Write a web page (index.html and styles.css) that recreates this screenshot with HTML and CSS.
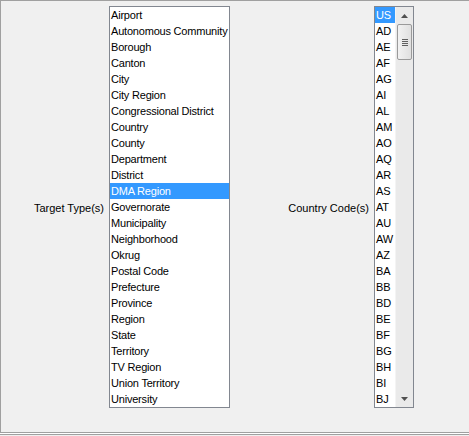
FILE: index.html
```html
<!DOCTYPE html>
<html>
<head>
<meta charset="utf-8">
<link rel="stylesheet" href="styles.css">
</head>
<body>
<div class="panel">
  <div class="row">
    <div class="label label-target">Target Type(s)</div>
    <div class="list list-types">
      <div class="item">Airport</div>
      <div class="item">Autonomous Community</div>
      <div class="item">Borough</div>
      <div class="item">Canton</div>
      <div class="item">City</div>
      <div class="item">City Region</div>
      <div class="item">Congressional District</div>
      <div class="item">Country</div>
      <div class="item">County</div>
      <div class="item">Department</div>
      <div class="item">District</div>
      <div class="item selected">DMA Region</div>
      <div class="item">Governorate</div>
      <div class="item">Municipality</div>
      <div class="item">Neighborhood</div>
      <div class="item">Okrug</div>
      <div class="item">Postal Code</div>
      <div class="item">Prefecture</div>
      <div class="item">Province</div>
      <div class="item">Region</div>
      <div class="item">State</div>
      <div class="item">Territory</div>
      <div class="item">TV Region</div>
      <div class="item">Union Territory</div>
      <div class="item">University</div>
    </div>
    <div class="label label-country">Country Code(s)</div>
    <div class="list list-codes">
      <div class="codes">
        <div class="item selected">US</div>
        <div class="item">AD</div>
        <div class="item">AE</div>
        <div class="item">AF</div>
        <div class="item">AG</div>
        <div class="item">AI</div>
        <div class="item">AL</div>
        <div class="item">AM</div>
        <div class="item">AO</div>
        <div class="item">AQ</div>
        <div class="item">AR</div>
        <div class="item">AS</div>
        <div class="item">AT</div>
        <div class="item">AU</div>
        <div class="item">AW</div>
        <div class="item">AZ</div>
        <div class="item">BA</div>
        <div class="item">BB</div>
        <div class="item">BD</div>
        <div class="item">BE</div>
        <div class="item">BF</div>
        <div class="item">BG</div>
        <div class="item">BH</div>
        <div class="item">BI</div>
        <div class="item">BJ</div>
      </div>
      <div class="scrollbar">
        <div class="arrow">
          <svg width="7" height="4" viewBox="0 0 7 4"><path d="M0 4 L3.5 0 L7 4 Z" fill="#505050"/></svg>
        </div>
        <div class="track">
          <div class="thumb">
            <div class="grip"></div>
          </div>
        </div>
        <div class="arrow">
          <svg width="7" height="4" viewBox="0 0 7 4"><path d="M0 0 L3.5 4 L7 0 Z" fill="#505050"/></svg>
        </div>
      </div>
    </div>
  </div>
</div>
</body>
</html>
```

FILE: styles.css
```css
html, body {
  margin: 0;
  padding: 0;
  background: #f0f0f0;
}
body {
  width: 469px;
  height: 436px;
  overflow: hidden;
  font-family: "Liberation Sans", Arial, sans-serif;
  font-size: 11px;
  color: #000;
}
.panel {
  box-sizing: border-box;
  height: 433px;
  border-top: 1px solid #a0a0a0;
  border-left: 1px solid #a0a0a0;
  border-bottom: 1px solid #a0a0a0;
  box-shadow: 0 1px 0 0 #ffffff, 0 2px 0 0 #a0a0a0;
  padding-top: 5px;
}
.row {
  display: flex;
  align-items: center;
}
.label {
  box-sizing: border-box;
  text-align: right;
  padding-right: 5px;
  padding-top: 1px;
  white-space: nowrap;
}
.label-target {
  width: 108px;
}
.label-country {
  width: 144px;
}
.list {
  box-sizing: border-box;
  background: #fff;
  border: 1px solid #828790;
  height: 402px;
}
.list-types {
  width: 121px;
}
.list-codes {
  width: 40px;
  display: flex;
}
.codes {
  width: 20px;
}
.item {
  height: 16px;
  line-height: 17px;
  padding-left: 1px;
  letter-spacing: -0.2px;
  white-space: nowrap;
  overflow: hidden;
}
.item.selected {
  background: #3399ff;
  color: #fff;
}
.scrollbar {
  width: 17px;
  display: flex;
  flex-direction: column;
  background: #eaeaea;
  border-left: 1px solid #f4f4f4;
}
.arrow {
  height: 17px;
  display: flex;
  align-items: center;
  justify-content: center;
}
.track {
  flex: 1;
}
.thumb {
  margin: 0 1px;
  height: 36px;
  box-sizing: border-box;
  border: 1px solid #9a9a9a;
  border-radius: 2px;
  background: linear-gradient(to right, #f2f2f2, #e0e0e0);
  display: flex;
  align-items: center;
  justify-content: center;
}
.grip {
  width: 6px;
  height: 7px;
  background: repeating-linear-gradient(to bottom, #606060 0, #606060 1px, transparent 1px, transparent 2px);
}
```
